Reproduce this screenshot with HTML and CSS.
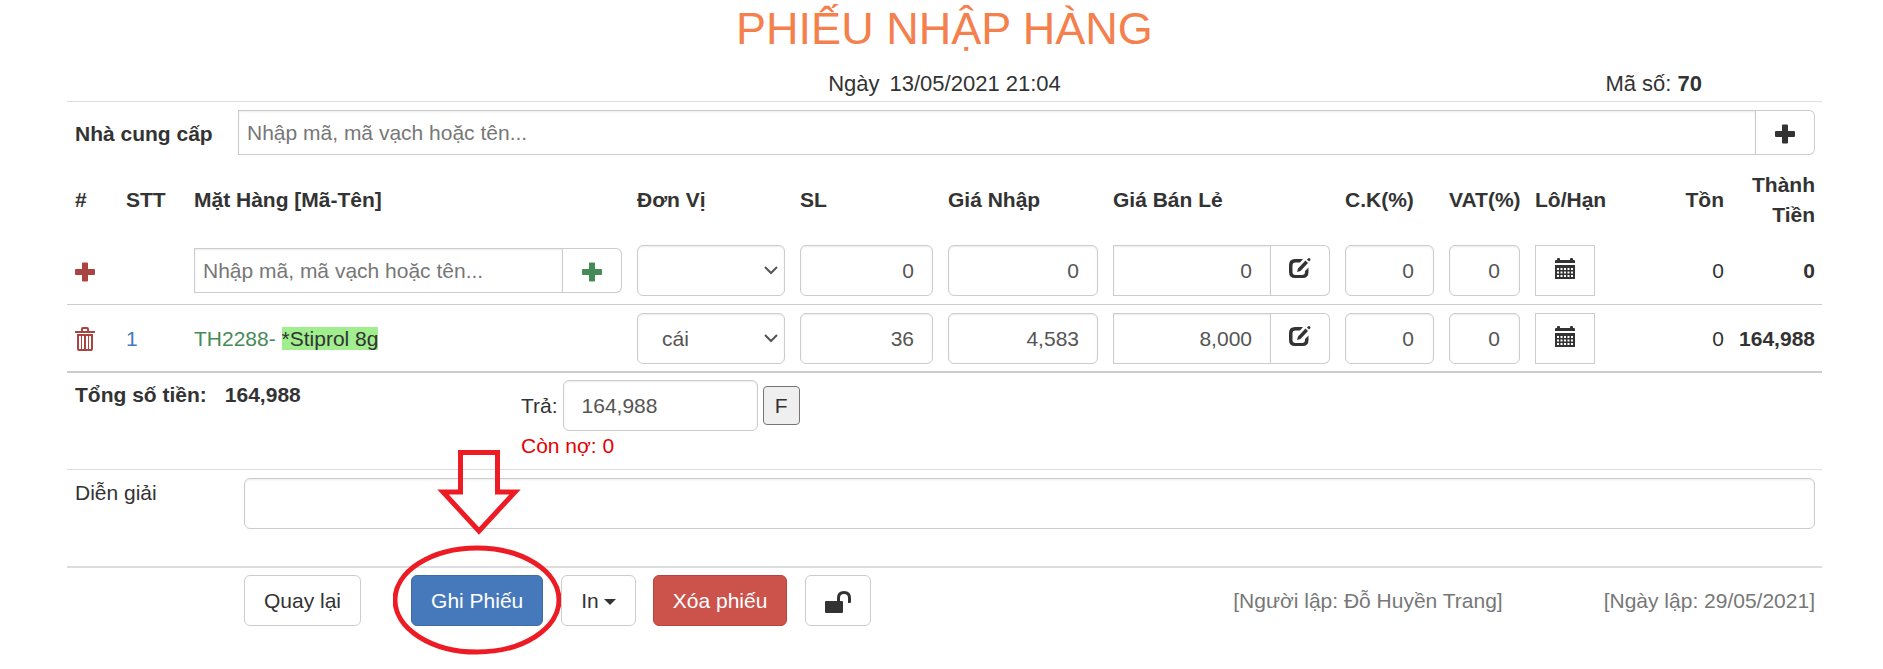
FILE: index.html
```html
<!DOCTYPE html>
<html lang="vi">
<head>
<meta charset="utf-8">
<title>Phiếu nhập hàng</title>
<link rel="stylesheet" href="styles.css">
</head>
<body>
<svg class="sprite" aria-hidden="true">
  <symbol id="plus" viewBox="0 0 20 20"><path d="M8 0.500h4q1 0 1 1V7h6q1 0 1 1v4q0 1-1 1h-6v5.500q0 1-1 1H8q-1 0-1-1V13H1q-1 0-1-1V8q0-1 1-1h6V1.500q0-1 1-1z"/></symbol>
  <symbol id="trash" viewBox="0 0 20 24"><path d="M6 4V2q0-2 2-2h4q2 0 2 2v2h6v2H0V4zM8 4h4V2H8zM2 7h16v15q0 2-2 2H4q-2 0-2-2zM4 9v13h12V9z" fill-rule="evenodd"/><path d="M6 9h1v13H6zM9 9h2v13H9zM13 9h1v13h-1z"/></symbol>
  <symbol id="edit" viewBox="0 0 22 21"><path d="M14 1H6Q0 1 0 7v7q0 6 6 6h7.500q6 0 6-6V9.500l-3.500 3.500v1q0 3-3 3H6.500q-3 0-3-3V7.500q0-3 3-3H11z"/><path d="M16.500 2.500l2.500 2.500-7.500 8L8 14l1-3.500zM18 1.500l1-1q1-1 2 0t0 2l-1 1z"/></symbol>
  <symbol id="calendar" viewBox="0 0 20 21"><path d="M0 5V3q0-1 1-1h1V1q0-1 1-1h1q1 0 1 1v1h10V1q0-1 1-1h1q1 0 1 1v1h1q1 0 1 1v2zM0 7h20v14H0zM2 10v2h2v-2zM5.500 10v2h2v-2zM9 10v2h2v-2zM12.500 10v2h2v-2zM16 10v2h2v-2zM2 13.500v2h2v-2zM5.500 13.500v2h2v-2zM9 13.500v2h2v-2zM12.500 13.500v2h2v-2zM16 13.500v2h2v-2zM2 17v2h2v-2zM5.500 17v2h2v-2zM9 17v2h2v-2zM12.500 17v2h2v-2zM16 17v2h2v-2z" fill-rule="evenodd"/></symbol>
  <symbol id="unlock" viewBox="0 0 26 22"><path d="M1 10h11V7q0-7 7-7t7 7v4q0 1-1 1h-2V7q0-4-4-4t-4 4v3h2q1 0 1 1v10q0 1-1 1H1q-1 0-1-1V11q0-1 1-1z"/></symbol>
</svg>
<main class="page">
  <h1 class="title">PHIẾU NHẬP HÀNG</h1>
  <div class="meta">
    <span class="meta-date"><span>Ngày</span><span>13/05/2021 21:04</span></span>
    <span class="meta-code">Mã số: <b>70</b></span>
  </div>

  <div class="supplier">
    <label class="supplier-label" for="supplier">Nhà cung cấp</label>
    <div class="group">
      <input class="input short" id="supplier" type="text" placeholder="Nhập mã, mã vạch hoặc tên...">
      <button class="addon short" type="button" aria-label="Thêm nhà cung cấp"><svg class="icon"><use href="#plus"/></svg></button>
    </div>
  </div>

  <table class="items">
    <colgroup>
      <col class="c-act"><col class="c-stt"><col><col class="c-unit"><col class="c-qty"><col class="c-cost"><col class="c-price"><col class="c-disc"><col class="c-vat"><col class="c-lot"><col class="c-stock"><col class="c-sum">
    </colgroup>
    <thead>
      <tr><th>#</th><th>STT</th><th>Mặt Hàng [Mã-Tên]</th><th>Đơn Vị</th><th>SL</th><th>Giá Nhập</th><th>Giá Bán Lẻ</th><th>C.K(%)</th><th>VAT(%)</th><th>Lô/Hạn</th><th class="num">Tồn</th><th class="num">Thành Tiền</th></tr>
    </thead>
    <tbody>
      <tr class="entry">
        <td><button class="plain red" type="button" aria-label="Thêm dòng"><svg class="icon"><use href="#plus"/></svg></button></td>
        <td></td>
        <td><div class="group">
          <input class="input short" type="text" aria-label="Mặt hàng" placeholder="Nhập mã, mã vạch hoặc tên...">
          <button class="addon short green" type="button" aria-label="Thêm mặt hàng"><svg class="icon"><use href="#plus"/></svg></button>
        </div></td>
        <td><select class="input select" aria-label="Đơn vị"><option></option></select></td>
        <td><input class="input num" type="text" aria-label="Số lượng" value="0"></td>
        <td><input class="input num" type="text" aria-label="Giá nhập" value="0"></td>
        <td><div class="group"><input class="input num" type="text" aria-label="Giá bán lẻ" value="0"><button class="addon" type="button" aria-label="Sửa giá"><svg class="icon edit"><use href="#edit"/></svg></button></div></td>
        <td><input class="input num wide" type="text" aria-label="Chiết khấu" value="0"></td>
        <td><input class="input num wide" type="text" aria-label="VAT" value="0"></td>
        <td><button class="lot" type="button" aria-label="Lô/Hạn"><svg class="icon cal"><use href="#calendar"/></svg></button></td>
        <td class="num">0</td>
        <td class="num sum">0</td>
      </tr>
      <tr>
        <td><button class="plain red" type="button" aria-label="Xóa dòng"><svg class="icon trash"><use href="#trash"/></svg></button></td>
        <td><a class="link" href="#">1</a></td>
        <td><a class="green" href="#">TH2288-</a> <mark class="name">*Stiprol 8g</mark></td>
        <td><select class="input select" aria-label="Đơn vị"><option>cái</option></select></td>
        <td><input class="input num" type="text" aria-label="Số lượng" value="36"></td>
        <td><input class="input num" type="text" aria-label="Giá nhập" value="4,583"></td>
        <td><div class="group"><input class="input num" type="text" aria-label="Giá bán lẻ" value="8,000"><button class="addon" type="button" aria-label="Sửa giá"><svg class="icon edit"><use href="#edit"/></svg></button></div></td>
        <td><input class="input num wide" type="text" aria-label="Chiết khấu" value="0"></td>
        <td><input class="input num wide" type="text" aria-label="VAT" value="0"></td>
        <td><button class="lot" type="button" aria-label="Lô/Hạn"><svg class="icon cal"><use href="#calendar"/></svg></button></td>
        <td class="num">0</td>
        <td class="num sum">164,988</td>
      </tr>
    </tbody>
  </table>

  <div class="totals">
    <div class="total"><span>Tổng số tiền:</span><span>164,988</span></div>
    <div class="payment">
      <div class="pay">
        <label for="pay">Trả:</label>
        <input class="input pay-input" id="pay" type="text" value="164,988">
        <button class="full" type="button">F</button>
      </div>
      <div class="debt">Còn nợ: 0</div>
    </div>
  </div>

  <div class="note">
    <label class="note-label" for="note">Diễn giải</label>
    <input class="input" id="note" type="text">
  </div>

  <div class="actions">
    <button class="btn back" type="button">Quay lại</button>
    <div class="save">
      <button class="btn primary" type="button">Ghi Phiếu</button>
      <svg class="callout" viewBox="0 0 168 205" aria-hidden="true">
        <path d="M67.500 2.500h37V42H122L86 81 50 42h17.500z"/>
        <ellipse cx="84" cy="150" rx="82" ry="52"/>
      </svg>
    </div>
    <button class="btn print" type="button">In<span class="caret"></span></button>
    <button class="btn danger" type="button">Xóa phiếu</button>
    <button class="btn" type="button" aria-label="Mở khóa"><svg class="icon unlock"><use href="#unlock"/></svg></button>
    <span class="author">[Người lập: Đỗ Huyền Trang]</span>
    <span class="created">[Ngày lập: 29/05/2021]</span>
  </div>
</main>
</body>
</html>
```
FILE: styles.css
```css
* { box-sizing: border-box; }
body {
  margin: 0;
  background: #fff;
  color: #333;
  font: 21px/30px "Liberation Sans", Arial, sans-serif;
}
button, input, select { font: inherit; color: inherit; margin: 0; }
a { text-decoration: none; }
.sprite { position: absolute; width: 0; height: 0; }
.page { padding: 0 61px 42px 67px; }
.title {
  margin: 0;
  padding-top: 4px;
  color: #f4804d;
  font-size: 45px;
  font-weight: 400;
  line-height: 50px;
  text-align: center;
}
.meta {
  display: grid;
  grid-template-columns: 1fr auto 1fr;
  padding: 13px 8px 0;
  border-bottom: 1px solid #ddd;
  font-size: 22px;
  line-height: 34px;
}
.meta-date { display: flex; gap: 10px; grid-column: 2; }
.meta-code { justify-self: end; padding-right: 112px; }

.supplier { display: flex; align-items: center; padding: 8px 7px 7px 8px; }
.supplier-label { width: 163px; padding-top: 3px; font-weight: 700; }
.group { display: flex; width: 100%; }
.supplier .group { flex: 1; }

.input {
  display: block;
  width: 100%;
  min-width: 0;
  height: 51px;
  padding: 0 18px;
  border: 1px solid #ccc;
  border-radius: 6px;
  background: #fff;
  box-shadow: inset 0 1px 2px rgba(0, 0, 0, .08);
  color: #555;
}
.input::placeholder { color: #777; opacity: 1; }
.input.short { padding: 0 8px; }
.short.short { height: 45px; }
.group .input { flex: 1; border-radius: 0; }
.input.wide { padding-right: 19px; }
.addon {
  flex: none;
  width: 59px;
  height: 51px;
  padding: 0;
  border: 1px solid #ccc;
  border-left: 0;
  border-radius: 0 6px 6px 0;
  background: #fff;
}
.select {
  padding: 0 20px 0 24px;
  appearance: none;
  background: #fff url("data:image/svg+xml,%3Csvg xmlns='http://www.w3.org/2000/svg' width='14' height='9'%3E%3Cpath d='M1 1l6 6 6-6' fill='none' stroke='%23555' stroke-width='2'/%3E%3C/svg%3E") no-repeat right 6px center;
}
.icon { display: inline-block; width: 20px; height: 20px; fill: currentColor; vertical-align: middle; }
.trash { width: 20px; height: 24px; }
.edit { width: 22px; height: 21px; }
.cal { height: 21px; }
.unlock { width: 26px; height: 22px; }

.items { width: 100%; table-layout: fixed; border-collapse: collapse; border-bottom: 2px solid #ccc; }
.items th, .items td { padding: 8px 7px 7px 8px; text-align: left; }
.items .entry td { padding-bottom: 8px; }
.items tr + tr { border-top: 1px solid #ccc; }
.items .num { text-align: right; }
.items .sum { padding-left: 0; font-weight: 700; }
.c-act { width: 51px; }
.c-stt { width: 68px; }
.c-unit { width: 163px; }
.c-qty { width: 148px; }
.c-cost { width: 165px; }
.c-price { width: 232px; }
.c-disc { width: 104px; }
.c-vat { width: 86px; }
.c-lot { width: 89px; }
.c-stock { width: 115px; }
.c-sum { width: 91px; }
.items th:nth-child(9), .items th:nth-child(10) { padding-right: 0; white-space: nowrap; }
.plain { display: block; padding: 0; border: 0; background: none; line-height: 24px; }
.lot { width: 60px; height: 51px; padding: 0; border: 1px solid #ccc; background: #fff; display: block; }
.lot .icon, .addon .edit { margin-bottom: 6px; }
.red { color: #a94442; }
.green { color: #468b57; }
.link { color: #4679bd; }
.name { background: #a0ee8e; color: #333; }

.totals { display: flex; padding: 7px 8px 8px; }
.total { display: flex; gap: 18px; width: 446px; font-weight: 700; }
.pay { display: flex; align-items: center; gap: 5px; }
.pay-input { width: 195px; }
.full {
  width: 37px;
  height: 39px;
  padding: 0;
  border: 1px solid #767676;
  border-radius: 4px;
  background: #efefef;
}
.debt { color: #e60000; }

.note { display: flex; padding: 8px 7px 37px 8px; border-top: 1px solid #ddd; }
.note-label { flex: none; width: 169px; }

.actions { display: flex; align-items: center; padding: 7px 7px 0 177px; border-top: 2px solid #ddd; }
.btn {
  height: 51px;
  padding: 0 19px;
  border: 1px solid #ccc;
  border-radius: 6px;
  background: #fff;
  white-space: nowrap;
}
.back { margin-right: 50px; }
.save { position: relative; margin-right: 18px; }
.primary { border-color: #3e6ca6; background: #4679bb; color: #fff; }
.print { margin-right: 17px; }
.danger { margin-right: 18px; border-color: #bd423b; background: #cb534c; color: #fff; }
.caret {
  display: inline-block;
  margin-left: 5px;
  border: 6px solid transparent;
  border-top-color: currentColor;
  border-bottom: 0;
  vertical-align: middle;
}
.callout {
  position: absolute;
  left: -18px;
  bottom: -29px;
  width: 168px;
  height: 205px;
  fill: none;
  stroke: #ed1c24;
  stroke-width: 5px;
  pointer-events: none;
}
.author { margin-left: auto; color: #777; }
.created { margin-left: 101px; color: #777; }
```
